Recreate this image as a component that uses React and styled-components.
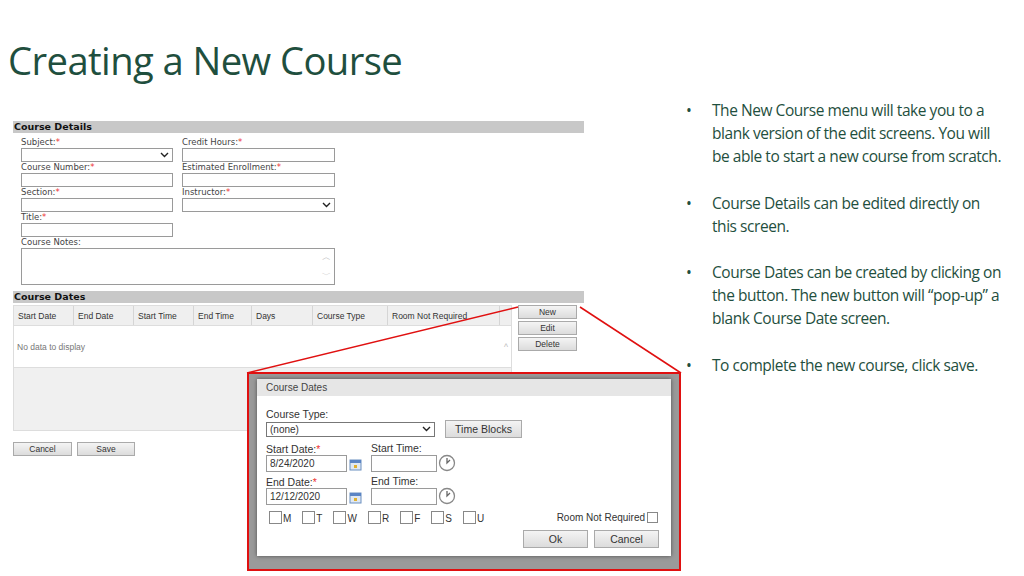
import React from "react";
import styled, { createGlobalStyle } from "styled-components";

const G = createGlobalStyle`
  body{margin:0;background:#fff;font-family:"Liberation Sans",Arial,sans-serif;}
  *{box-sizing:border-box;}
`;
const Page = styled.div`position:relative;width:1024px;height:576px;overflow:hidden;background:#fff;`;
const Title = styled.h1`margin:0;position:absolute;left:8px;top:33px;font-family:"Open Sans",Lato,sans-serif;font-weight:400;font-size:39px;color:#1f4f3e;letter-spacing:-0.6px;transform:scaleX(0.98);transform-origin:left;`;
const Left = styled.div`position:absolute;left:13px;top:121px;width:571px;font-family:"DejaVu Sans",Verdana,sans-serif;font-size:9px;color:#333;`;
const Bar = styled.div`background:#c8c8c8;height:12px;font-weight:bold;font-size:9.5px;color:#111;padding-left:1px;line-height:12px;`;
const Form = styled.div`display:grid;grid-template-columns:161px 160px;padding:4px 0 6px 8px;`;
const Field = styled.div`height:${p=>p.h||25}px;display:flex;flex-direction:column;`;
const Label = styled.span`font-size:8.5px;line-height:11px;color:#444;`;
const Req = styled.span`color:#e33;`;
const Input = styled.div`width:${p=>p.w||152}px;height:${p=>p.ht||14}px;border:1px solid #9a9a9a;background:#fff;position:relative;display:flex;align-items:center;justify-content:flex-end;padding-right:3px;font-size:10px;`;
const Table = styled.div`display:flex;gap:6px;margin-top:2px;`;
const Grid = styled.div`width:499px;height:126px;display:flex;flex-direction:column;background:#f0f0f0;border:1px solid #ddd;`;
const Head = styled.div`display:flex;height:20px;background:#efefef;border-bottom:1px solid #ddd;`;
const Th = styled.div`width:${p=>p.w}px;border-right:1px solid #d5d5d5;padding:5px 4px;font-size:8.5px;color:#333;font-family:"Liberation Sans",sans-serif;`;
const Body = styled.div`height:42px;background:#fff;display:flex;align-items:center;justify-content:space-between;padding:0 3px;color:#777;font-size:8.5px;font-family:"Liberation Sans",sans-serif;border-bottom:1px solid #ddd;`;
const Btns = styled.div`display:flex;flex-direction:column;gap:2px;`;
const Btn = styled.div`width:${p=>p.w||59}px;height:${p=>p.h||14}px;border:1px solid #aaa;background:linear-gradient(#f4f4f4,#dcdcdc);font-size:${p=>p.fs||8.5}px;display:flex;align-items:center;justify-content:center;color:#333;font-family:"Liberation Sans",sans-serif;`;
const Foot = styled.div`display:flex;gap:5px;margin-top:11px;`;
const Bullets = styled.ul`position:absolute;left:686px;top:99px;width:322px;margin:0;padding:0;list-style:none;font-family:"Open Sans",Lato,sans-serif;font-size:15.5px;letter-spacing:-0.45px;line-height:23.2px;color:#1f4f3e;`;
const Li = styled.li`position:relative;padding-left:26px;margin-bottom:23px;&::before{content:"•";position:absolute;left:0;}`;
const Zoom = styled.div`position:absolute;left:247px;top:372px;width:434px;height:199px;border:2px solid #e01010;background:#9a9a9a;overflow:hidden;`;
const Dialog = styled.div`position:absolute;left:8px;top:5px;width:414px;height:177px;background:#fff;box-shadow:0 0 4px rgba(0,0,0,.5);font-family:"Liberation Sans",sans-serif;color:#333;font-size:10.5px;`;
const DHead = styled.div`height:17px;background:#e6e6e6;padding:3px 9px;font-size:10px;color:#444;`;
const DBody = styled.div`padding:12px 9px 0;display:flex;flex-direction:column;`;
const Row = styled.div`display:flex;gap:${p=>p.gap||0}px;align-items:${p=>p.al||"flex-end"};margin-bottom:${p=>p.mb||0}px;`;
const Col = styled.div`display:flex;flex-direction:column;width:${p=>p.w}px;`;
const DL = styled.span`line-height:12px;`;
const Days = styled.div`display:flex;gap:11px;`;
const Day = styled.span`display:flex;align-items:flex-end;gap:1px;font-size:10px;&::before{content:"";width:11px;height:11px;border:1px solid #888;display:inline-block;}`;
const Lines = styled.svg`position:absolute;left:0;top:0;pointer-events:none;`;

const Cal=()=>(<svg width="14" height="14" viewBox="0 0 14 14"><rect x="2" y="3" width="11" height="10" fill="#dfe8f3" stroke="#6b8fbf"/><rect x="2" y="3" width="11" height="3" fill="#5b84c4"/><rect x="6" y="8" width="3" height="3" fill="#e0b030"/></svg>);
const Clock=()=>(<svg width="18" height="18" viewBox="0 0 18 18"><circle cx="9" cy="9" r="7.5" fill="#fff" stroke="#888" strokeWidth="1.3"/><path d="M9 4V9L12 6" fill="none" stroke="#666" strokeWidth="1.3"/></svg>);
const Chev=()=>(<svg width="9" height="6" viewBox="0 0 9 6"><path d="M1 1l3.5 3.5L8 1" fill="none" stroke="#222" strokeWidth="1.4"/></svg>);

export default function App(){
  return (<Page><G/>
    <Title>Creating a New Course</Title>
    <Left>
      <Bar>Course Details</Bar>
      <Form>
        <Field><Label>Subject:<Req>*</Req></Label><Input><Chev/></Input></Field>
        <Field><Label>Credit Hours:<Req>*</Req></Label><Input w={153}/></Field>
        <Field><Label>Course Number:<Req>*</Req></Label><Input/></Field>
        <Field><Label>Estimated Enrollment:<Req>*</Req></Label><Input w={153}/></Field>
        <Field><Label>Section:<Req>*</Req></Label><Input/></Field>
        <Field><Label>Instructor:<Req>*</Req></Label><Input w={153}><Chev/></Input></Field>
        <Field><Label>Title:<Req>*</Req></Label><Input/></Field>
        <Field/>
        <Field h={48} style={{gridColumn:"1 / 3"}}><Label>Course Notes:</Label><Input w={314} ht={42} style={{flexDirection:"column",alignItems:"flex-end",justifyContent:"space-around",color:"#bbb",fontSize:"9px"}}><span>︿</span><span>﹀</span></Input></Field>
      </Form>
      <Bar>Course Dates</Bar>
      <Table>
        <Grid>
          <Head>
            <Th w={60}>Start Date</Th><Th w={60}>End Date</Th><Th w={60}>Start Time</Th><Th w={58}>End Time</Th><Th w={61}>Days</Th><Th w={75}>Course Type</Th><Th w={112}>Room Not Required</Th>
          </Head>
          <Body><span>No data to display</span><span style={{color:"#bbb"}}>^</span></Body>
        </Grid>
        <Btns><Btn>New</Btn><Btn>Edit</Btn><Btn>Delete</Btn></Btns>
      </Table>
      <Foot><Btn>Cancel</Btn><Btn w={58}>Save</Btn></Foot>
    </Left>
    <Bullets>
      <Li>The New Course menu will take you to a blank version of the edit screens. You will be able to start a new course from scratch.</Li>
      <Li>Course Details can be edited directly on this screen.</Li>
      <Li>Course Dates can be created by clicking on the button.  The new button will “pop-up” a blank Course Date screen.</Li>
      <Li>To complete the new course, click save.</Li>
    </Bullets>
    <Lines width="1024" height="576"><line x1="518" y1="307" x2="247" y2="373" stroke="#e01010" strokeWidth="1.5"/><line x1="580" y1="307" x2="681" y2="373" stroke="#e01010" strokeWidth="1.5"/></Lines>
    <Zoom>
      <Dialog>
        <DHead>Course Dates</DHead>
        <DBody>
          <DL>Course Type:</DL>
          <Row gap={10} mb={4} al="center">
            <Input w={169} ht={15} style={{justifyContent:"space-between",paddingLeft:"3px",borderColor:"#777"}}>(none)<Chev/></Input>
            <Btn w={77} h={18} fs={10.5}>Time Blocks</Btn>
          </Row>
          <Row gap={9} mb={3}>
            <Col w={96}><DL>Start Date:<Req>*</Req></DL><Row gap={1} al="center"><Input w={81} ht={17} style={{justifyContent:"flex-start",paddingLeft:"3px"}}>8/24/2020</Input><Cal/></Row></Col>
            <Col w={90}><DL>Start Time:</DL><Row gap={1} al="center"><Input w={66} ht={17}/><Clock/></Row></Col>
          </Row>
          <Row gap={9} mb={6}>
            <Col w={96}><DL>End Date:<Req>*</Req></DL><Row gap={1} al="center"><Input w={81} ht={17} style={{justifyContent:"flex-start",paddingLeft:"3px"}}>12/12/2020</Input><Cal/></Row></Col>
            <Col w={90}><DL>End Time:</DL><Row gap={1} al="center"><Input w={66} ht={17}/><Clock/></Row></Col>
          </Row>
          <Row al="center" style={{justifyContent:"space-between",paddingLeft:"3px",paddingRight:"4px"}}>
            <Days>{["M","T","W","R","F","S","U"].map(d=><Day key={d}>{d}</Day>)}</Days>
            <Row gap={2} al="center"><span style={{fontSize:"10px"}}>Room Not Required</span><span style={{width:11,height:11,border:"1px solid #888",display:"inline-block"}}/></Row>
          </Row>
          <Row gap={6} style={{justifyContent:"flex-end",marginTop:"6px",marginRight:"3px"}}>
            <Btn w={65} h={18} fs={10.5}>Ok</Btn><Btn w={65} h={18} fs={10.5}>Cancel</Btn>
          </Row>
        </DBody>
      </Dialog>
    </Zoom>
  </Page>);
}
